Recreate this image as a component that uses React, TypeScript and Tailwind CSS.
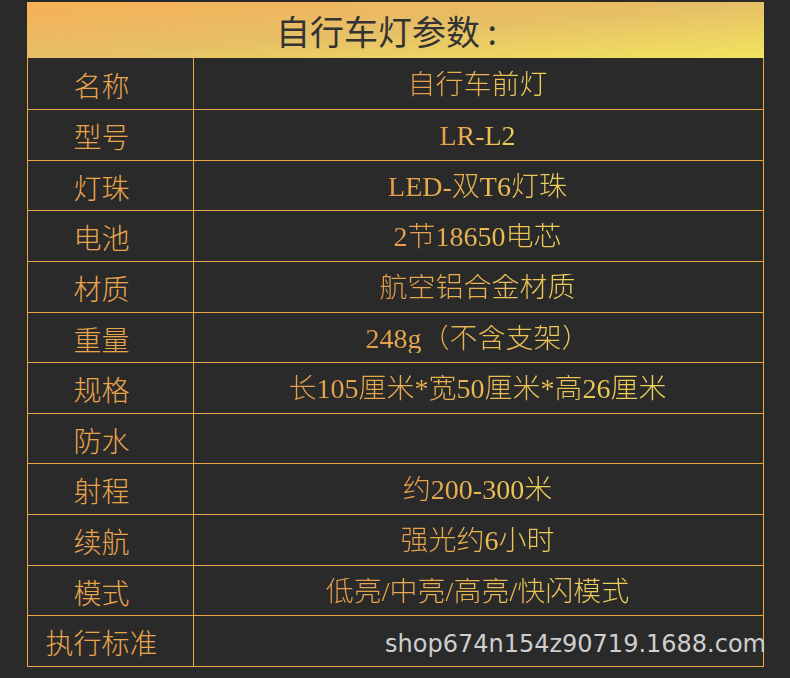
import React from "react";

const rows: [string, string, number][] = [
  ["名称", "自行车前灯", 51],
  ["型号", "LR-L2", 51],
  ["灯珠", "LED-双T6灯珠", 50],
  ["电池", "2节18650电芯", 51],
  ["材质", "航空铝合金材质", 51],
  ["重量", "248g（不含支架）", 50],
  ["规格", "长105厘米*宽50厘米*高26厘米", 51],
  ["防水", "", 50],
  ["射程", "约200-300米", 51],
  ["续航", "强光约6小时", 51],
  ["模式", "低亮/中亮/高亮/快闪模式", 50],
  ["执行标准", "", 51],
];

const serif = { fontFamily: '"Liberation Serif", "Noto Sans CJK SC", serif' };
const sans = { fontFamily: '"Noto Sans CJK SC", "Noto Sans", sans-serif' };

export default function App() {
  return (
    <div className="w-[790px] h-[678px] bg-[#2a2a2a] pl-[27px] pt-[2px] overflow-hidden">
      <div className="w-[737px]">
        <div
          className="h-[56px] flex items-center justify-center pr-[18px] bg-gradient-to-br from-[#f6b058] via-[#e6bf66] to-[#f2e45e] text-[#333333] text-[34px] leading-none"
          style={sans}
        >
          <span className="pt-[2px]">自行车灯参数 :</span>
        </div>
        <div className="border-l border-r border-b border-[#eba646]">
          {rows.map(([k, v, h], i) => (
            <div
              key={i}
              className={`relative flex ${h === 51 ? "h-[51px]" : "h-[50px]"} ${i > 0 ? "border-t border-[#eba646]" : ""}`}
            >
              <div
                className="w-[166px] shrink-0 border-r border-[#eba646] flex items-center justify-center pr-[18px] pt-[2px] text-[28px] font-light leading-none text-[#e9a54c]"
                style={sans}
              >
                {k}
              </div>
              <div className="flex-1 flex items-center justify-center pr-[2px] pt-[2px] text-[28px] font-light leading-none" style={serif}>
                <span className="inline-block bg-gradient-to-r from-[#e69c48] to-[#eed35a] bg-clip-text text-transparent">
                  {v}
                </span>
              </div>
              {i === rows.length - 1 && (
                <span
                  className="absolute right-[-3px] top-[16px] text-[24px] leading-none text-[#cfcfcf]"
                  style={{ fontFamily: '"DejaVu Sans", sans-serif' }}
                >
                  shop674n154z90719.1688.com
                </span>
              )}
            </div>
          ))}
        </div>
      </div>
    </div>
  );
}
